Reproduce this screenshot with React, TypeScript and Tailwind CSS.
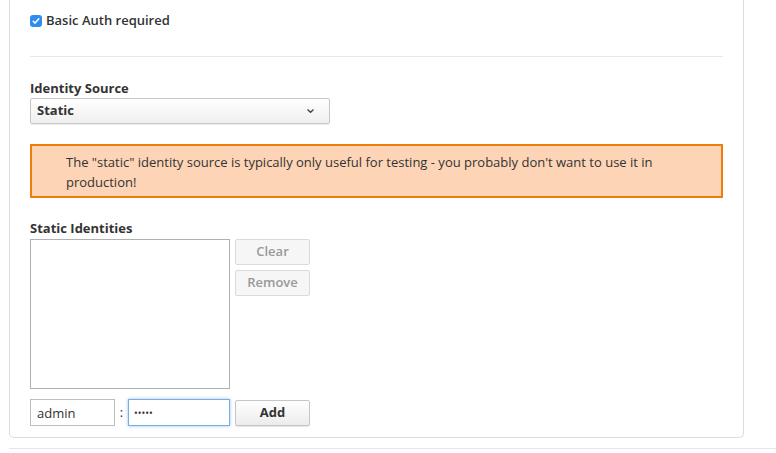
import { useState } from "react";

export default function App() {
  const [user, setUser] = useState("admin");
  const [pass, setPass] = useState("12345");

  return (
    <div className="w-[776px] h-[453px] overflow-hidden bg-white font-['Open_Sans',sans-serif] text-[13px] text-[#333]">
      <div className="ml-[9px] w-[735px] h-[438px] border-x border-b border-[#dcdcdc] rounded-b-[5px] px-[20px] pt-[12px]">
        <label className="flex items-center gap-[4px] h-[18px] font-semibold">
          <span className="w-[12px] h-[12px] rounded-[3px] bg-[#2f8cf2] flex items-center justify-center">
            <svg width="8" height="8" viewBox="0 0 8 8">
              <path d="M1.2 4.2 L3.1 6.1 L6.8 1.8" fill="none" stroke="white" strokeWidth="1.5" strokeLinecap="round" strokeLinejoin="round" />
            </svg>
          </span>
          Basic Auth required
        </label>

        <div className="mt-[26px] border-t border-[#e8e8e8]" />

        <div className="mt-[22px] font-bold leading-[18px]">Identity Source</div>
        <div className="mt-[1px] w-[300px] h-[26px] border border-[#c6c6c6] rounded-[2px] bg-gradient-to-b from-white to-[#efefef] shadow-[0_1px_1px_rgba(0,0,0,0.08)] flex items-center justify-between pl-[6px] pr-[14px] font-bold">
          <span>Static</span>
          <svg width="9" height="6" viewBox="0 0 9 6">
            <path d="M1.5 1.5 L4.5 4.3 L7.5 1.5" fill="none" stroke="#444" strokeWidth="1.4" />
          </svg>
        </div>

        <div className="mt-[20px] h-[54px] border-2 border-[#ef7d0b] bg-[#fdd4b6] pl-[34px] pr-[20px] pt-[6px] leading-[20px] text-[#333]">
          The "static" identity source is typically only useful for testing - you probably don't want to use it in production!
        </div>

        <div className="mt-[21px] font-bold leading-[18px]">Static Identities</div>
        <div className="mt-[2px] flex gap-[5px]">
          <div className="w-[200px] h-[150px] border border-[#b0b0b0]" />
          <div className="flex flex-col gap-[5px]">
            <button className="w-[75px] h-[26px] border border-[#dadada] rounded-[2px] bg-[#f6f6f6] text-[#999] font-semibold">
              Clear
            </button>
            <button className="w-[75px] h-[26px] border border-[#dadada] rounded-[2px] bg-[#f6f6f6] text-[#999] font-semibold">
              Remove
            </button>
          </div>
        </div>

        <div className="mt-[10px] flex items-center">
          <input
            value={user}
            onChange={(e) => setUser(e.target.value)}
            className="w-[85px] h-[27px] border border-[#bdbdbd] px-[6px] text-[13px] text-[#333] outline-none"
          />
          <span className="w-[13px] text-center">:</span>
          <input
            type="password"
            value={pass}
            onChange={(e) => setPass(e.target.value)}
            className="w-[102px] h-[27px] border border-[#78aee4] shadow-[0_0_3px_rgba(80,150,230,0.6)] px-[5px] text-[10px] text-[#333] outline-none"
          />
          <button className="ml-[5px] w-[75px] h-[26px] border border-[#c6c6c6] rounded-[2px] bg-gradient-to-b from-white to-[#ececec] shadow-[0_1px_1px_rgba(0,0,0,0.1)] font-bold text-[#333]">
            Add
          </button>
        </div>
      </div>
      <div className="ml-[9px] mt-[10px] border-t border-[#e6e6e6]" />
    </div>
  );
}
